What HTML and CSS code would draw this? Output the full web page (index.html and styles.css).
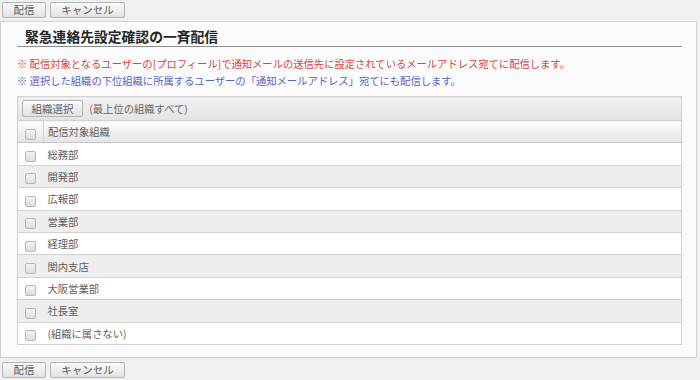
FILE: index.html
```html
<!DOCTYPE html>
<html lang="ja">
<head>
    <meta charset="utf-8">
    <title>緊急連絡先設定確認の一斉配信</title>
    <link rel="stylesheet" href="styles.css">
</head>
<body>
<div class="actions">
    <button class="btn btn-send" type="button">配信</button>
    <button class="btn btn-cancel" type="button">キャンセル</button>
</div>

<div class="panel">
    <h2 class="panel-title">緊急連絡先設定確認の一斉配信</h2>
    <p class="note note-red">※ 配信対象となるユーザーの[プロフィール]で通知メールの送信先に設定されているメールアドレス宛てに配信します。</p>
    <p class="note note-blue">※ 選択した組織の下位組織に所属するユーザーの「通知メールアドレス」宛てにも配信します。</p>

    <table class="org-list">
        <tr class="toolbar">
            <td colspan="2">
                <button class="btn btn-select" type="button">組織選択</button>
                <span class="scope">(最上位の組織すべて)</span>
            </td>
        </tr>
        <tr class="head">
            <td class="chk"><span class="box"></span></td>
            <td class="name">配信対象組織</td>
        </tr>
        <tr><td class="chk"><span class="box"></span></td><td class="name">総務部</td></tr>
        <tr class="alt"><td class="chk"><span class="box"></span></td><td class="name">開発部</td></tr>
        <tr><td class="chk"><span class="box"></span></td><td class="name">広報部</td></tr>
        <tr class="alt"><td class="chk"><span class="box"></span></td><td class="name">営業部</td></tr>
        <tr><td class="chk"><span class="box"></span></td><td class="name">経理部</td></tr>
        <tr class="alt"><td class="chk"><span class="box"></span></td><td class="name">関内支店</td></tr>
        <tr><td class="chk"><span class="box"></span></td><td class="name">大阪営業部</td></tr>
        <tr class="alt"><td class="chk"><span class="box"></span></td><td class="name">社長室</td></tr>
        <tr><td class="chk"><span class="box"></span></td><td class="name">(組織に属さない)</td></tr>
    </table>
</div>

<div class="actions actions-bottom">
    <button class="btn btn-send" type="button">配信</button>
    <button class="btn btn-cancel" type="button">キャンセル</button>
</div>
</body>
</html>
```

FILE: styles.css
```css
body {
    margin: 0;
    background-color: #f0f0f0;
    font-family: "Noto Sans CJK JP", "Noto Sans", sans-serif;
    font-size: 10.3px;
    color: #5e5e5e;
}

.actions {
    display: flex;
    gap: 4px;
    padding: 2px 2px 0 2px;
    height: 19px;
}

.actions-bottom {
    padding-top: 4px;
}

.btn {
    height: 16px;
    padding: 0;
    border: 1px solid #b4b4b4;
    border-radius: 2px;
    background: linear-gradient(#fafafa, #e2e2e2);
    font-family: "Noto Sans CJK JP", sans-serif;
    font-size: 10.5px;
    line-height: 14px;
    color: #5e5e5e;
    cursor: pointer;
}

.btn-send {
    width: 44px;
}

.btn-cancel {
    width: 75px;
}

.panel {
    margin: 0 3px 0 0;
    background-color: #fbfbfb;
    border: 1px solid #d2d2d2;
    padding: 0 14px 12px 16px;
}

.panel-title {
    margin: 0;
    padding: 7px 0 3px 8px;
    border-bottom: 1px solid #8c8c8c;
    font-size: 13.8px;
    line-height: 14px;
    font-weight: bold;
    color: #262626;
}

.note {
    margin: 0;
    line-height: 17px;
}

.note:first-of-type {
    margin-top: 8px;
}

.note-red {
    color: #d2463c;
}

.note-blue {
    color: #5565c8;
}

.org-list {
    width: 100%;
    margin-top: 7px;
    border-collapse: collapse;
    border: 1px solid #d0d0d0;
    background-color: #fff;
}

.org-list td {
    height: 21.4px;
    padding: 0;
    border-top: 1px solid #d2d2d2;
}

.toolbar td {
    height: 23px;
    padding-left: 4px;
    background: linear-gradient(#f2f2f2, #e3e3e3);
}

.btn-select {
    width: 61px;
    height: 17px;
    margin-right: 4px;
}

.scope {
    color: #666;
}

.head td {
    background: linear-gradient(#fdfdfd, #e4e4e4);
    border-bottom: 1px solid #c8c8c8;
}

.head .chk {
    border-right: 1px solid #cfcfcf;
}

.chk {
    width: 25px;
    text-align: center;
}

.name {
    padding-left: 4px !important;
}

.alt td {
    background-color: #eeeeee;
}

.box {
    display: inline-block;
    width: 9px;
    height: 9px;
    margin-top: 5px;
    vertical-align: top;
    border: 1px solid #b8b8b8;
    border-radius: 2px;
    background: linear-gradient(#f4f4f4, #dcdcdc);
}
```
